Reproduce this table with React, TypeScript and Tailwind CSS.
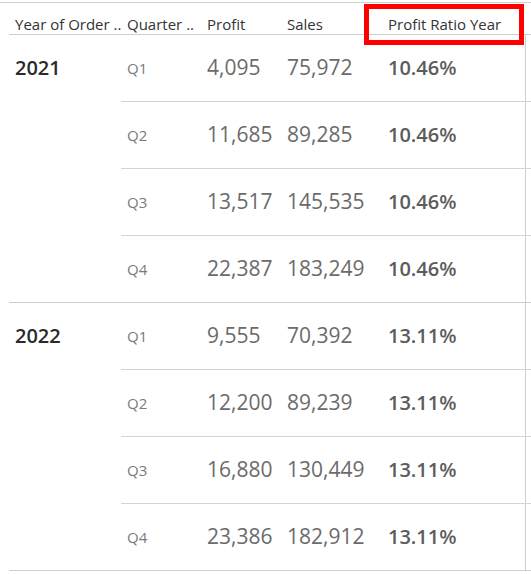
const years = [
  {
    year: "2021",
    ratio: "10.46%",
    rows: [
      { q: "Q1", profit: "4,095", sales: "75,972" },
      { q: "Q2", profit: "11,685", sales: "89,285" },
      { q: "Q3", profit: "13,517", sales: "145,535" },
      { q: "Q4", profit: "22,387", sales: "183,249" },
    ],
  },
  {
    year: "2022",
    ratio: "13.11%",
    rows: [
      { q: "Q1", profit: "9,555", sales: "70,392" },
      { q: "Q2", profit: "12,200", sales: "89,239" },
      { q: "Q3", profit: "16,880", sales: "130,449" },
      { q: "Q4", profit: "23,386", sales: "182,912" },
    ],
  },
]

const font = { fontFamily: '"Open Sans", "Liberation Sans", sans-serif' }

export default function App() {
  return (
    <div className="relative w-[531px] h-[574px] bg-white overflow-hidden" style={font}>
      <div className="mt-[2px] border-t border-[#d0d0d0]" />

      {/* header */}
      <div className="ml-[9px] flex h-[32px] pt-[11px] border-b border-[#cfcfcf] text-[15px] text-[#333]">
        <div className="w-[112px] pl-[6px] flex items-center whitespace-nowrap">Year of Order ..</div>
        <div className="w-[80px] pl-[6px] flex items-center whitespace-nowrap">Quarter ..</div>
        <div className="w-[80px] pl-[6px] flex items-center">Profit</div>
        <div className="w-[101px] pl-[6px] flex items-center">Sales</div>
        <div className="w-[143px] pl-[6px] flex items-center whitespace-nowrap">Profit Ratio Year</div>
        <div className="flex-1" />
      </div>

      {years.map((y) => (
        <div key={y.year} className="ml-[9px] flex border-b border-[#cfcfcf]">
          <div className="w-[112px] pl-[6px] h-[66px] flex items-center text-[20px] font-semibold text-[#2b2b2b]">
            {y.year}
          </div>
          <div className="flex-1 flex flex-col">
            {y.rows.map((r, i) => (
              <div
                key={r.q}
                className={`flex h-[66px] box-content ${i < 3 ? "border-b border-[#d4d4d4]" : ""}`}
              >
                <div className="w-[80px] pl-[6px] flex items-center text-[15px] text-[#7a7a7a]">{r.q}</div>
                <div className="w-[80px] pl-[6px] flex items-center text-[21px] text-[#6b6b6b]">{r.profit}</div>
                <div className="w-[101px] pl-[6px] flex items-center text-[21px] text-[#6b6b6b]">{r.sales}</div>
                <div className="w-[143px] pl-[6px] flex items-center text-[20px] font-semibold text-[#5c5c5c]">
                  {y.ratio}
                </div>
                <div className="flex-1 border-l border-[#cfcfcf]" />
              </div>
            ))}
          </div>
        </div>
      ))}

      {/* annotation box */}
      <div className="absolute left-[364px] top-[4px] w-[160px] h-[41px] border-[5px] border-[#ff0000]" />
    </div>
  )
}
